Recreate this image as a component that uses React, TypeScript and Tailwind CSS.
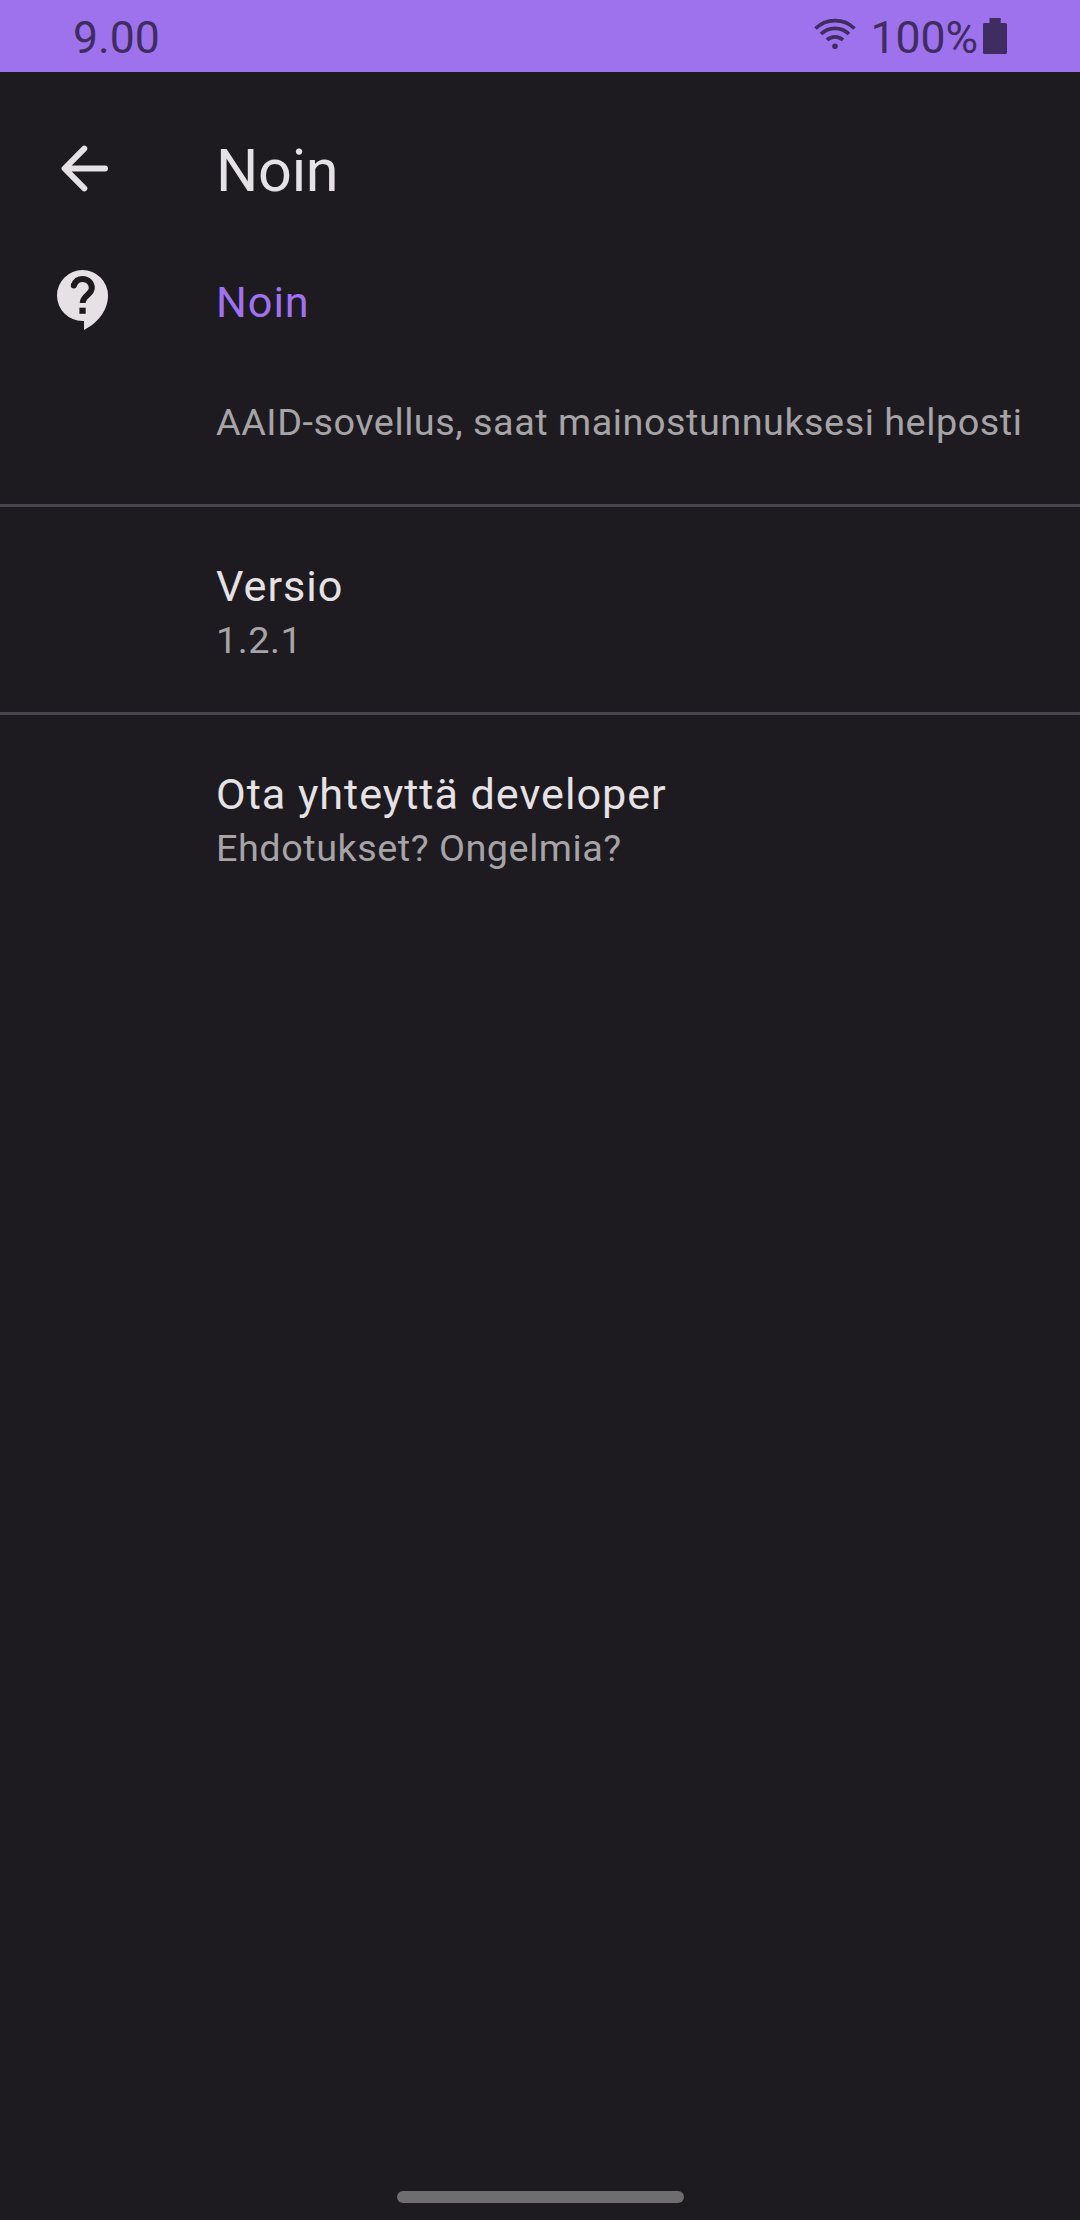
import type { ReactNode } from "react";

function WifiIcon() {
  return (
    <svg className="mt-[18px] h-8 w-[42px]" viewBox="0 0 42 32" fill="none" stroke="#3f2c60" strokeWidth="3.7">
      <path d="M1.5 10.5A28 28 0 0 1 40.5 10.5" />
      <path d="M7 16A20 20 0 0 1 35 16" />
      <path d="M13 22A11.6 11.6 0 0 1 29 22" />
      <circle cx="21" cy="28.3" r="2.8" fill="#3f2c60" stroke="none" />
    </svg>
  );
}

function BatteryIcon() {
  return (
    <svg className="mt-[18px] h-9 w-6" viewBox="0 0 24 36" fill="#3f2c60">
      <path d="M6.5 0H17.7V5H22.5Q24 5 24 6.5V34.5Q24 36 22.5 36H1.5Q0 36 0 34.5V6.5Q0 5 1.5 5H6.5Z" />
    </svg>
  );
}

function BackIcon() {
  return (
    <svg
      className="h-[47px] w-[47px]"
      viewBox="0 0 47 47"
      fill="none"
      stroke="#e6e1e5"
      strokeWidth="6"
      strokeLinecap="round"
      strokeLinejoin="round"
    >
      <path d="M44 23.5H4M23.3 3.6L3.6 23.5L23.3 43.4" />
    </svg>
  );
}

function HelpIcon() {
  return (
    <svg className="h-[60px] w-[51px]" viewBox="0 0 51 60" fill="none">
      <path fill="#e6e1e5" d="M27 60V51H25.5A25.5 25.5 0 1 1 51 25.5C51 40 41 53 27 60Z" />
      <path
        stroke="#1d1b20"
        strokeWidth="6"
        d="M16.9 15.4C18.2 11.6 21.4 9 25.7 9C31 9 34.8 13 34.8 18C34.8 24.5 25.7 25.5 25.7 33"
      />
      <circle cx="16.8" cy="15.4" r="3" fill="#1d1b20" />
      <path fill="#1d1b20" d="M22.4 37.7H28.7V43.8H22.4Z" />
    </svg>
  );
}

function Title({ children }: { children: ReactNode }) {
  return <div className="text-[43.2px] leading-[51px] tracking-[0.97px] text-[#e6e1e5]">{children}</div>;
}

function Summary({ children }: { children: ReactNode }) {
  return (
    <div className="text-[37.8px] leading-[44px] tracking-[0.52px] whitespace-nowrap text-[#a6a4a7]">
      {children}
    </div>
  );
}

function Preference({ title, summary }: { title: string; summary: string }) {
  return (
    <section className="flex flex-col gap-1.5 border-t-[3px] border-[#49454f] pt-[54px] pb-[50px] pl-[216px]">
      <Title>{title}</Title>
      <Summary>{summary}</Summary>
    </section>
  );
}

export default function App() {
  return (
    <div className="flex h-[2220px] w-[1080px] flex-col overflow-hidden bg-[#1d1b20] font-[Roboto,sans-serif]">
      <header className="flex h-[72px] shrink-0 items-start bg-[#9e72ec] pr-[73px] pl-[73px] text-[44.5px] leading-[52px] text-[#3f2c60]">
        <span className="mt-3 mr-auto">9.00</span>
        <WifiIcon />
        <span className="mt-3 mr-[5px] ml-3.5">100%</span>
        <BatteryIcon />
      </header>

      <div className="flex h-[198px] shrink-0 items-center">
        <div className="mb-1.5 w-[216px] pl-[61px]">
          <BackIcon />
        </div>
        <h1 className="text-[59.4px] leading-[72px] tracking-[-0.3px] text-[#e6e1e5]">Noin</h1>
      </div>

      <main className="flex grow flex-col">
        <section className="flex h-[234px]">
          <div className="w-[216px] pl-[57px]">
            <HelpIcon />
          </div>
          <div className="flex flex-col gap-[72px] pt-[7px]">
            <h2 className="text-[43.2px] leading-[51px] tracking-[0.97px] text-[#a071f0]">Noin</h2>
            <Summary>AAID-sovellus, saat mainostunnuksesi helposti</Summary>
          </div>
        </section>
        <Preference title="Versio" summary="1.2.1" />
        <Preference title="Ota yhteyttä developer" summary="Ehdotukset? Ongelmia?" />
      </main>

      <div className="mx-auto mb-[17px] h-3 w-[287px] rounded-full bg-[#6e6e70]" />
    </div>
  );
}
